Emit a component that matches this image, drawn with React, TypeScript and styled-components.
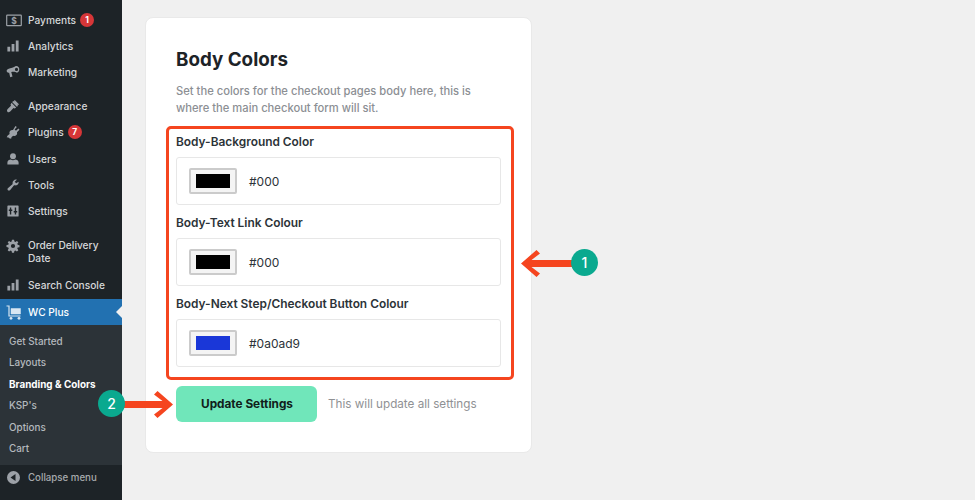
import React from "react";
import styled, { createGlobalStyle } from "styled-components";

const Global = createGlobalStyle`
  html, body { margin: 0; padding: 0; background: #f0f0f0; }
  * { box-sizing: border-box; }
`;

const Page = styled.div`
  position: relative;
  display: flex;
  width: 975px;
  height: 500px;
  overflow: hidden;
  background: #f0f0f0;
  font-family: Inter, "Liberation Sans", sans-serif;
`;

const Sidebar = styled.nav`
  flex: 0 0 122px;
  height: 500px;
  padding-top: 7px;
  background: #1d2327;
  color: #d5d7d9;
  font-size: 10.2px;
  font-weight: 500;
`;

const Row = styled.div<{ $gap?: number; $active?: boolean; $tall?: boolean }>`
  display: flex;
  align-items: ${(p) => (p.$tall ? "flex-start" : "center")};
  min-height: 26px;
  margin-top: ${(p) => p.$gap ?? 0}px;
  padding: ${(p) => (p.$tall ? "7px 0 6px 6px" : "0 0 0 6px")};
  line-height: 13px;
  position: relative;
  background: ${(p) => (p.$active ? "#2271b1" : "transparent")};
  color: ${(p) => (p.$active ? "#fff" : "inherit")};
`;

const IconBox = styled.span`
  flex: 0 0 22px;
  display: flex;
  align-items: center;
  color: #9ca1a7;
  svg { display: block; }
`;

const ActiveIconBox = styled(IconBox)`
  color: #d8e6f2;
`;

const Badge = styled.span`
  display: inline-flex;
  align-items: center;
  justify-content: center;
  width: 14px;
  height: 14px;
  margin-left: 4px;
  border-radius: 50%;
  background: #d63638;
  color: #fff;
  font-size: 8.5px;
  font-weight: 700;
`;

const Notch = styled.span`
  position: absolute;
  right: 0;
  top: 7px;
  border-style: solid;
  border-width: 6px 6px 6px 0;
  border-color: transparent #f0f0f0 transparent transparent;
`;

const Submenu = styled.div`
  height: 140px;
  padding: 5.5px 0 0 9px;
  background: #2c3338;
  color: #b4b9be;
  font-size: 9.9px;
  font-weight: 500;
`;

const SubItem = styled.div<{ $current?: boolean }>`
  height: 21.5px;
  line-height: 21.5px;
  color: ${(p) => (p.$current ? "#fff" : "inherit")};
  font-weight: ${(p) => (p.$current ? 700 : 500)};
`;

const Collapse = styled.div`
  display: flex;
  align-items: center;
  height: 25px;
  padding-left: 7px;
  color: #a7aaad;
  font-size: 9.7px;
  font-weight: 500;
`;

const CollapseIcon = styled(IconBox)`
  flex-basis: 21px;
`;

const Main = styled.main`
  flex: 1;
  padding: 17px 0 0 23px;
`;

const Card = styled.section`
  width: 387px;
  height: 436px;
  padding: 29px 30px 0;
  background: #fff;
  border: 1px solid #e9e9e9;
  border-radius: 8px;
`;

const Title = styled.h1`
  margin: 0;
  color: #1d2327;
  font-size: 18.8px;
  line-height: 26px;
  font-weight: 700;
`;

const Description = styled.p`
  margin: 10px 0 0;
  color: #8c8f94;
  font-size: 11.2px;
  line-height: 17px;
  font-weight: 500;
`;

const Fields = styled.div`
  margin-top: 16px;
`;

const FieldGroup = styled.div`
  margin-bottom: 9px;
`;

const Label = styled.div`
  height: 18px;
  margin-bottom: 6px;
  color: #2c3338;
  font-size: 11.9px;
  line-height: 18px;
  font-weight: 600;
`;

const ColorField = styled.div`
  display: flex;
  align-items: center;
  gap: 12px;
  width: 325px;
  height: 48px;
  padding-left: 12px;
  border: 1px solid #e7e7e7;
  border-radius: 3px;
  color: #2c3338;
  font-size: 12px;
`;

const Swatch = styled.span<{ $color: string }>`
  display: flex;
  width: 48px;
  height: 26px;
  padding: 4px 5px;
  border: 2px solid #cbcbcb;
  border-radius: 2px;
  background: #f4f4f4;
  &::after {
    content: "";
    flex: 1;
    background: ${(p) => p.$color};
  }
`;

const Actions = styled.div`
  display: flex;
  align-items: center;
  gap: 11px;
  margin-top: 19px;
`;

const SaveButton = styled.button`
  width: 141px;
  height: 36px;
  padding: 0 0 0 1px;
  border: 0;
  border-radius: 6px;
  background: #70e6ba;
  color: #10201a;
  font: 700 11.8px Inter, "Liberation Sans", sans-serif;
`;

const Hint = styled.span`
  color: #8f9194;
  font-size: 11.7px;
`;

const Highlight = styled.div`
  position: absolute;
  left: 166px;
  top: 126px;
  width: 348px;
  height: 254px;
  border: 3px solid #f5451f;
  border-radius: 5px;
`;

const Arrow = styled.svg<{ $x: number; $y: number }>`
  position: absolute;
  left: ${(p) => p.$x}px;
  top: ${(p) => p.$y}px;
`;

const Marker = styled.div<{ $x: number; $y: number }>`
  position: absolute;
  left: ${(p) => p.$x}px;
  top: ${(p) => p.$y}px;
  width: 27px;
  height: 27px;
  border-radius: 50%;
  background: #0aa98f;
  color: #fff;
  font-size: 14px;
  font-weight: 500;
  line-height: 27px;
  text-align: center;
`;

const G = ({ children, s = 14 }: { children: React.ReactNode; s?: number }) => (
  <svg width={s} height={s} viewBox="0 0 20 20" fill="currentColor">{children}</svg>
);

const icons: Record<string, React.ReactNode> = {
  payments: (
    <svg width="16" height="13" viewBox="0 0 16 13">
      <rect x="0.7" y="1.2" width="14.6" height="10.4" rx="0.6" fill="none" stroke="currentColor" strokeWidth="1.2" />
      <text x="8" y="9.8" textAnchor="middle" fontSize="8.5" fontWeight="700" fill="currentColor" fontFamily="Inter">$</text>
    </svg>
  ),
  analytics: <G><path d="M2 11h4v7H2zM8 7h4v11H8zM14 2h4v16h-4z" /></G>,
  marketing: (
    <G>
      <path fillRule="evenodd" d="M14 1.500c2.600-.6 4.800 1.500 5 4.200.2 2.700-1.300 5-3.500 5.300C13.500 9.500 10 9.300 7.500 10l1.800 6.500-3.300 1-1.500-6.600C3 11.500 1.300 10.700 1 9c-.3-1.700.5-2.800 2-3.400C7 4.500 11 3.500 14 1.500zM15 4a2.200 2.200 0 1 0 0 4.500A2.200 2.200 0 0 0 15 4z" />
    </G>
  ),
  appearance: (
    <G>
      <path d="M12.500 1.500 18.500 7.500 17.500 8.500 16.500 7.800 17 10l-1.500 1L9 4.500l1-1.500 2 .5-.5-1 1-1zM8 5.500l6.500 6.500-2 1.500-1.800-.7L6 18c-1.500 1.200-3.200 1.200-4 .2-.8-.9-.8-2.500.4-3.800l4.700-4.700L6.500 8 8 5.500z" />
    </G>
  ),
  plugins: (
    <G>
      <path d="M13.500 1.500 15.500 3l-3.200 3.600 2 1.700L17.700 5l1.600 1.800-3.600 3.700c.5 1.500.1 2.900-.8 3.900-1.300 1.300-3 1.500-4.400.9L8 17l-.7 2.500-2.700-.7-1-1L1 17.500l1.400-2.500 2.800-2.300c-.6-1.400-.4-3.200.9-4.500 1-1 2.400-1.300 3.900-.9l3.500-5.800z" />
    </G>
  ),
  users: <G><circle cx="10" cy="6" r="4.200" /><path d="M2 18v-3c0-2.500 2.500-4 5-4.200 1.500 1.200 4.500 1.200 6 0 2.500.2 5 1.700 5 4.200v3H2z" /></G>,
  tools: <G><path d="M18 5.500c.5 2.500-1.500 5.500-5 5-1 0-1.300-.2-1.800.3L6 17c-1 1.300-2.500 1.300-3.300.4-.9-1-.8-2.200.3-3.100l6.200-5.300c.4-.4.300-.9.200-1.500C9 4.500 12.500 1.500 15.500 2.500L12.500 5.500l2 2L18 5.500z" /></G>,
  settings: <G><path fillRule="evenodd" d="M3 2h14a1 1 0 0 1 1 1v14a1 1 0 0 1-1 1H3a1 1 0 0 1-1-1V3a1 1 0 0 1 1-1zm2.500 3v3H4v2h1.500v5h2v-5H9V8H7.500V5h-2zm7 0v5H11v2h1.500v3h2v-3H16v-2h-1.500V5h-2z" /></G>,
  gear: <G><path fillRule="evenodd" d="M8.500 1h3l.5 2.600 1.400.6L15.600 2.700l2 2-1.500 2.200.6 1.400 2.600.5v3l-2.600.5-.6 1.400 1.500 2.200-2 2-2.200-1.500-1.400.6-.5 2.600h-3l-.5-2.600-1.400-.6-2.200 1.500-2-2 1.500-2.200-.6-1.400L.7 11.600v-3l2.600-.5.6-1.400L2.400 4.700l2-2 2.200 1.500 1.400-.6L8.500 1zM10 7a3 3 0 1 0 0 6 3 3 0 0 0 0-6z" /></G>,
  cart: (
    <svg width="16" height="15" viewBox="0 0 16 15" fill="none" stroke="currentColor">
      <path d="M0.500 1H3v10h11.500" strokeWidth="1.200" />
      <path d="M5 3.500h9.500v5.500H5z" fill="currentColor" strokeWidth="0.5" />
      <circle cx="5" cy="13.300" r="1.400" fill="currentColor" stroke="none" />
      <circle cx="13" cy="13.300" r="1.400" fill="currentColor" stroke="none" />
    </svg>
  ),
  collapse: <svg width="13" height="13" viewBox="0 0 13 13" fill="currentColor"><path fillRule="evenodd" d="M6.500 0a6.500 6.500 0 1 1 0 13 6.500 6.500 0 0 1 0-13zM8.500 3 3.500 6.500l5 3.500V3z" /></svg>,
};

const menu = [
  { id: "payments", label: "Payments", badge: "1" },
  { id: "analytics", label: "Analytics" },
  { id: "marketing", label: "Marketing" },
  { id: "appearance", label: "Appearance", gap: 8 },
  { id: "plugins", label: "Plugins", badge: "7" },
  { id: "users", label: "Users", gap: 1 },
  { id: "tools", label: "Tools" },
  { id: "settings", label: "Settings" },
  { id: "gear", label: "Order Delivery Date", gap: 8, tall: true },
  { id: "analytics", label: "Search Console", gap: 1 },
];

const submenu = ["Get Started", "Layouts", "Branding & Colors", "KSP's", "Options", "Cart"];

const fields = [
  { label: "Body-Background Color", value: "#000", color: "#000" },
  { label: "Body-Text Link Colour", value: "#000", color: "#000" },
  { label: "Body-Next Step/Checkout Button Colour", value: "#0a0ad9", color: "#1a37d8" },
];

const PointerArrow = ({ x, y, w, left }: { x: number; y: number; w: number; left?: boolean }) => (
  <Arrow $x={x} $y={y} width={w} height="27" viewBox={`0 0 ${w} 27`} fill="#f5451f">
    <g transform={left ? undefined : `translate(${w} 0) scale(-1 1)`}>
      <polygon points={`0,13.500 15.500,0 19,3.500 10.500,10 ${w},10 ${w},17 10.500,17 19,23.500 15.500,27`} />
    </g>
  </Arrow>
);

export default function App() {
  return (
    <>
      <Global />
      <Page>
        <Sidebar>
          {menu.map((m) => (
            <Row key={m.label} $gap={m.gap} $tall={m.tall}>
              <IconBox>{icons[m.id]}</IconBox>
              <span>{m.label}</span>
              {m.badge && <Badge>{m.badge}</Badge>}
            </Row>
          ))}
          <Row $active $gap={1}>
            <ActiveIconBox>{icons.cart}</ActiveIconBox>
            <span>WC Plus</span>
            <Notch />
          </Row>
          <Submenu>
            {submenu.map((s) => (
              <SubItem key={s} $current={s.startsWith("Branding")}>{s}</SubItem>
            ))}
          </Submenu>
          <Collapse>
            <CollapseIcon>{icons.collapse}</CollapseIcon>
            <span>Collapse menu</span>
          </Collapse>
        </Sidebar>
        <Main>
          <Card>
            <Title>Body Colors</Title>
            <Description>
              Set the colors for the checkout pages body here, this is
              <br />
              where the main checkout form will sit.
            </Description>
            <Fields>
              {fields.map((f) => (
                <FieldGroup key={f.label}>
                  <Label>{f.label}</Label>
                  <ColorField>
                    <Swatch $color={f.color} />
                    <span>{f.value}</span>
                  </ColorField>
                </FieldGroup>
              ))}
            </Fields>
            <Actions>
              <SaveButton>Update Settings</SaveButton>
              <Hint>This will update all settings</Hint>
            </Actions>
          </Card>
        </Main>
        <Highlight />
        <PointerArrow x={521} y={250} w={52} left />
        <Marker $x={571} $y={249}>1</Marker>
        <PointerArrow x={122} y={391} w={51} />
        <Marker $x={98} $y={390}>2</Marker>
      </Page>
    </>
  );
}
